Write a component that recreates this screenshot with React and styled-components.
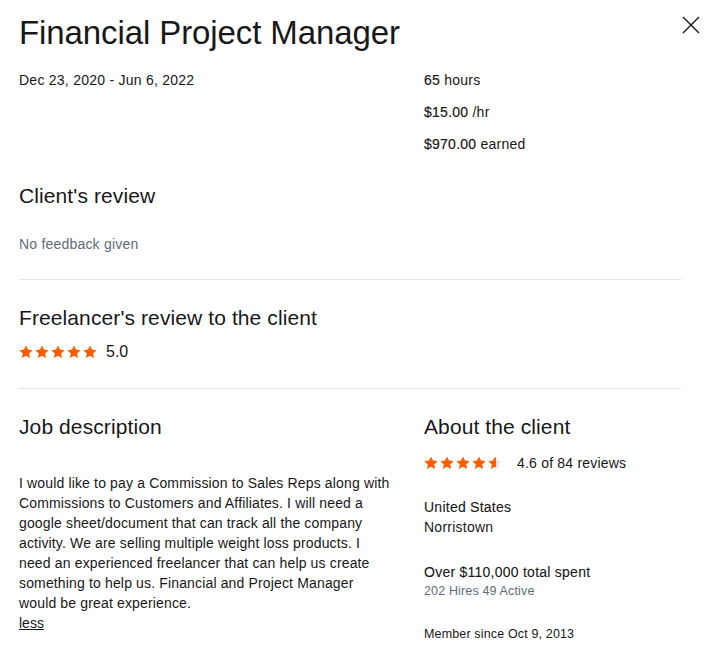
import React from 'react';
import styled, { createGlobalStyle } from 'styled-components';

const GlobalStyle = createGlobalStyle`
    body {
        margin: 0;
        background: #ffffff;
        font-family: "Liberation Sans", Arial, sans-serif;
        color: #181818;
    }
`

const STAR = 'M7 0.4l2 4.2 4.6 0.6-3.4 3.2 0.9 4.6L7 10.7l-4.1 2.3 0.9-4.6L0.4 5.2l4.6-0.6z';

const Star = ({ fill = 1 }) => {
    const id = `half-${Math.random().toString(36).slice(2, 8)}`;
    return (
        <StarSvg viewBox="0 0 14 14">
            <defs>
                <linearGradient id={id}>
                    <stop offset={fill} stopColor="#ff5c00" />
                    <stop offset={fill} stopColor="#e4e5e7" />
                </linearGradient>
            </defs>
            <path d={STAR} fill={`url(#${id})`} />
        </StarSvg>
    );
};

const Stars = ({ value }) => (
    <StarRow>
        {[0, 1, 2, 3, 4].map(i => (
            <Star key={i} fill={Math.max(0, Math.min(1, value - i))} />
        ))}
    </StarRow>
);

export default function App() {
    return (
        <Page>
            <GlobalStyle />
            <Header>
                <Title>Financial Project Manager</Title>
                <CloseButton aria-label="Close">
                    <svg width="18" height="18" viewBox="0 0 18 18">
                        <path d="M1 1L17 17M17 1L1 17" stroke="#181818" strokeWidth="1.4" />
                    </svg>
                </CloseButton>
            </Header>
            <Body>
                <TwoCol>
                    <Text>Dec 23, 2020 - Jun 6, 2022</Text>
                    <Stats>
                        <Text><Strong>65</Strong> hours</Text>
                        <Text><Strong>$15.00</Strong> /hr</Text>
                        <Text><Strong>$970.00</Strong> earned</Text>
                    </Stats>
                </TwoCol>

                <Section top={28} bottom={25}>
                    <SectionTitle>Client's review</SectionTitle>
                    <Muted>No feedback given</Muted>
                </Section>
                <Divider />
                <Section top={24} bottom={26}>
                    <SectionTitle>Freelancer's review to the client</SectionTitle>
                    <RatingLine gap={10}>
                        <Stars value={5} />
                        <RatingValue>5.0</RatingValue>
                    </RatingLine>
                </Section>
                <Divider />

                <Columns>
                    <div>
                        <SectionTitle>Job description</SectionTitle>
                        <Description>
                            I would like to pay a Commission to Sales Reps along with Commissions to Customers and Affiliates. I will need a google sheet/document that can track all the company activity. We are selling multiple weight loss products. I need an experienced freelancer that can help us create something to help us. Financial and Project Manager would be great experience.
                        </Description>
                        <LessLink href="#">less</LessLink>
                    </div>
                    <div>
                        <SectionTitle>About the client</SectionTitle>
                        <RatingLine gap={12}>
                            <Stars value={4.6} />
                            <ReviewCount>4.6 of 84 reviews</ReviewCount>
                        </RatingLine>
                        <ClientBlock>
                            <Text medium>United States</Text>
                            <Text>Norristown</Text>
                        </ClientBlock>
                        <ClientBlock>
                            <Text medium>Over $110,000 total spent</Text>
                            <Small muted>202 Hires 49 Active</Small>
                        </ClientBlock>
                        <ClientBlock>
                            <Small>Member since Oct 9, 2013</Small>
                        </ClientBlock>
                    </div>
                </Columns>
            </Body>
        </Page>
    );
}

const Page = styled.div`
    width: 705px;
    padding: 0 5px 0 19px;
    box-sizing: border-box;
`

const Header = styled.div`
    display: flex;
    align-items: flex-start;
    justify-content: space-between;
    height: 70px;
`

const Title = styled.h1`
    margin: 0;
    padding-top: 12px;
    font-size: 33px;
    line-height: 42px;
    font-weight: 400;
    letter-spacing: -0.1px;
    color: #181818;
`

const CloseButton = styled.button`
    border: none;
    background: transparent;
    padding: 0;
    width: 18px;
    height: 18px;
    margin-top: 16px;
    cursor: pointer;
`

const Body = styled.div`
    margin-right: 19px;
`

const TwoCol = styled.div`
    display: grid;
    grid-template-columns: 405px 1fr;
`

const Columns = styled(TwoCol)`
    padding-top: 24px;
`

const Stats = styled.div`
    display: flex;
    flex-direction: column;
    gap: 12px;
`

const Text = styled.div`
    font-size: 14px;
    line-height: 20px;
    letter-spacing: 0.25px;
    color: #181818;
    -webkit-text-stroke: ${props => props.medium ? '0.1px #181818' : '0'};
`

const Strong = styled.span`
    -webkit-text-stroke: 0.2px #181818;
`

const Section = styled.div`
    padding: ${props => props.top}px 0 ${props => props.bottom}px;
`

const SectionTitle = styled.h2`
    margin: 0;
    font-size: 21px;
    font-weight: 400;
    line-height: 28px;
    letter-spacing: 0.1px;
    color: #181818;
`

const Muted = styled.div`
    margin-top: 24px;
    font-size: 14px;
    line-height: 20px;
    letter-spacing: 0.2px;
    color: #5f6b7a;
`

const Divider = styled.hr`
    margin: 0;
    border: none;
    border-top: 1px solid #e4e5e7;
`

const RatingLine = styled.div`
    display: flex;
    align-items: center;
    height: 20px;
    margin-top: ${props => props.gap}px;
`

const StarRow = styled.div`
    display: flex;
    gap: 2px;
`

const StarSvg = styled.svg`
    width: 14px;
    height: 14px;
    display: block;
`

const RatingValue = styled.span`
    margin-left: 9px;
    font-size: 16px;
    color: #181818;
`

const ReviewCount = styled.span`
    margin-left: 15px;
    font-size: 14px;
    letter-spacing: 0.2px;
    color: #181818;
`

const Description = styled.p`
    margin: 32px 0 0;
    font-size: 14px;
    line-height: 20px;
    letter-spacing: 0.15px;
    color: #181818;
    max-width: 375px;
`

const LessLink = styled.a`
    font-size: 14px;
    line-height: 20px;
    color: #181818;
    text-decoration: underline;
`

const ClientBlock = styled.div`
    margin-top: 24px;

    & + & {
        margin-top: 25px;
    }
`

const Small = styled.div`
    font-size: 12.5px;
    line-height: 18px;
    letter-spacing: 0.15px;
    color: ${props => props.muted ? '#5f6b7a' : '#181818'};
`
